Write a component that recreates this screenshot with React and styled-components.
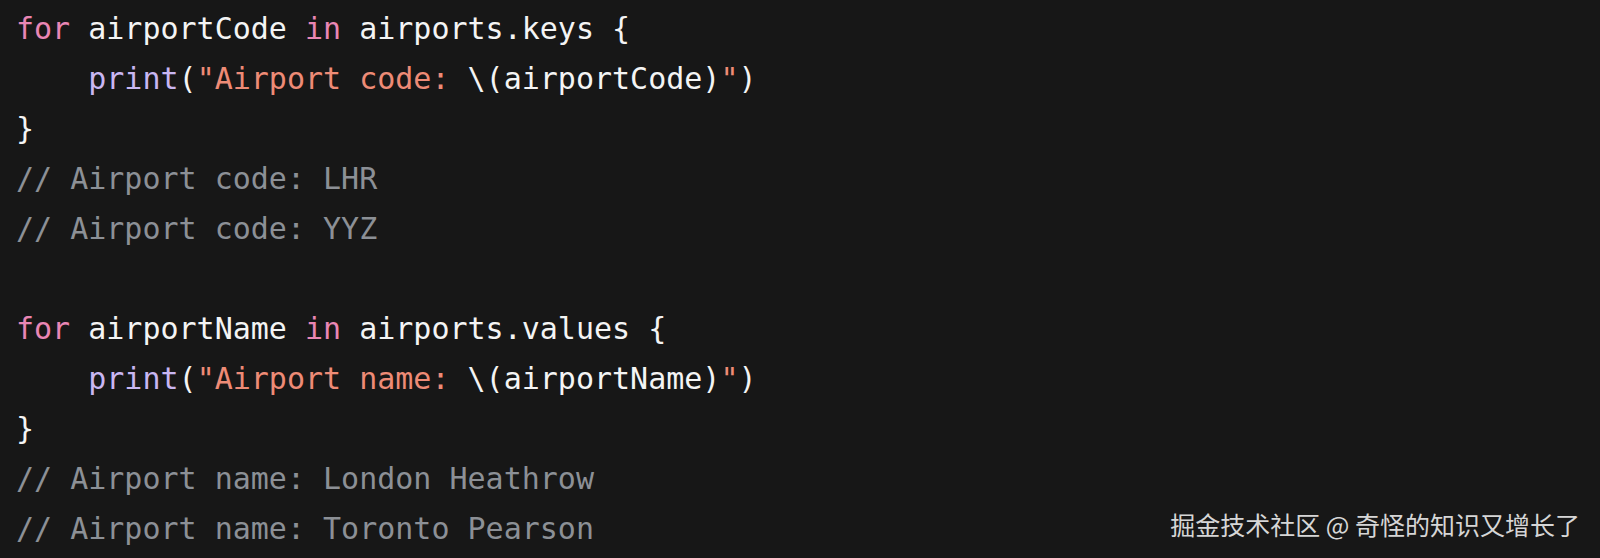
import styled, { createGlobalStyle } from "styled-components";

const GlobalStyle = createGlobalStyle`
  html, body {
    margin: 0;
    padding: 0;
    background: #171717;
  }
`;

const Frame = styled.div`
  position: relative;
  width: 1600px;
  height: 558px;
  overflow: hidden;
  background: #171717;
`;

const Code = styled.pre`
  margin: 0;
  padding: 4px 0 0 16px;
  font-family: "DejaVu Sans Mono", "Liberation Mono", monospace;
  font-size: 30px;
  line-height: 50px;
  color: #f4f4f4;
  white-space: pre;
`;

const Line = styled.div`
  height: 50px;
`;

const Kw = styled.span`
  color: #e986b4;
`;

const Fn = styled.span`
  color: #c9b6f2;
`;

const Str = styled.span`
  color: #ee8b76;
`;

const Comment = styled.span`
  color: #8c9096;
`;

const Watermark = styled.div`
  position: absolute;
  right: 20px;
  bottom: 21px;
  font-family: "Noto Sans CJK SC", "Noto Sans", sans-serif;
  font-size: 25px;
  line-height: 25px;
  color: #d6d6d6;
`;

export default function App() {
  return (
    <Frame>
      <GlobalStyle />
      <Code>
        <Line>
          <Kw>for</Kw> airportCode <Kw>in</Kw> airports.keys {"{"}
        </Line>
        <Line>
          {"    "}
          <Fn>print</Fn>(<Str>"Airport code: </Str>\(airportCode)<Str>"</Str>)
        </Line>
        <Line>{"}"}</Line>
        <Line>
          <Comment>// Airport code: LHR</Comment>
        </Line>
        <Line>
          <Comment>// Airport code: YYZ</Comment>
        </Line>
        <Line />
        <Line>
          <Kw>for</Kw> airportName <Kw>in</Kw> airports.values {"{"}
        </Line>
        <Line>
          {"    "}
          <Fn>print</Fn>(<Str>"Airport name: </Str>\(airportName)<Str>"</Str>)
        </Line>
        <Line>{"}"}</Line>
        <Line>
          <Comment>// Airport name: London Heathrow</Comment>
        </Line>
        <Line>
          <Comment>// Airport name: Toronto Pearson</Comment>
        </Line>
      </Code>
      <Watermark>掘金技术社区 @ 奇怪的知识又增长了</Watermark>
    </Frame>
  );
}
